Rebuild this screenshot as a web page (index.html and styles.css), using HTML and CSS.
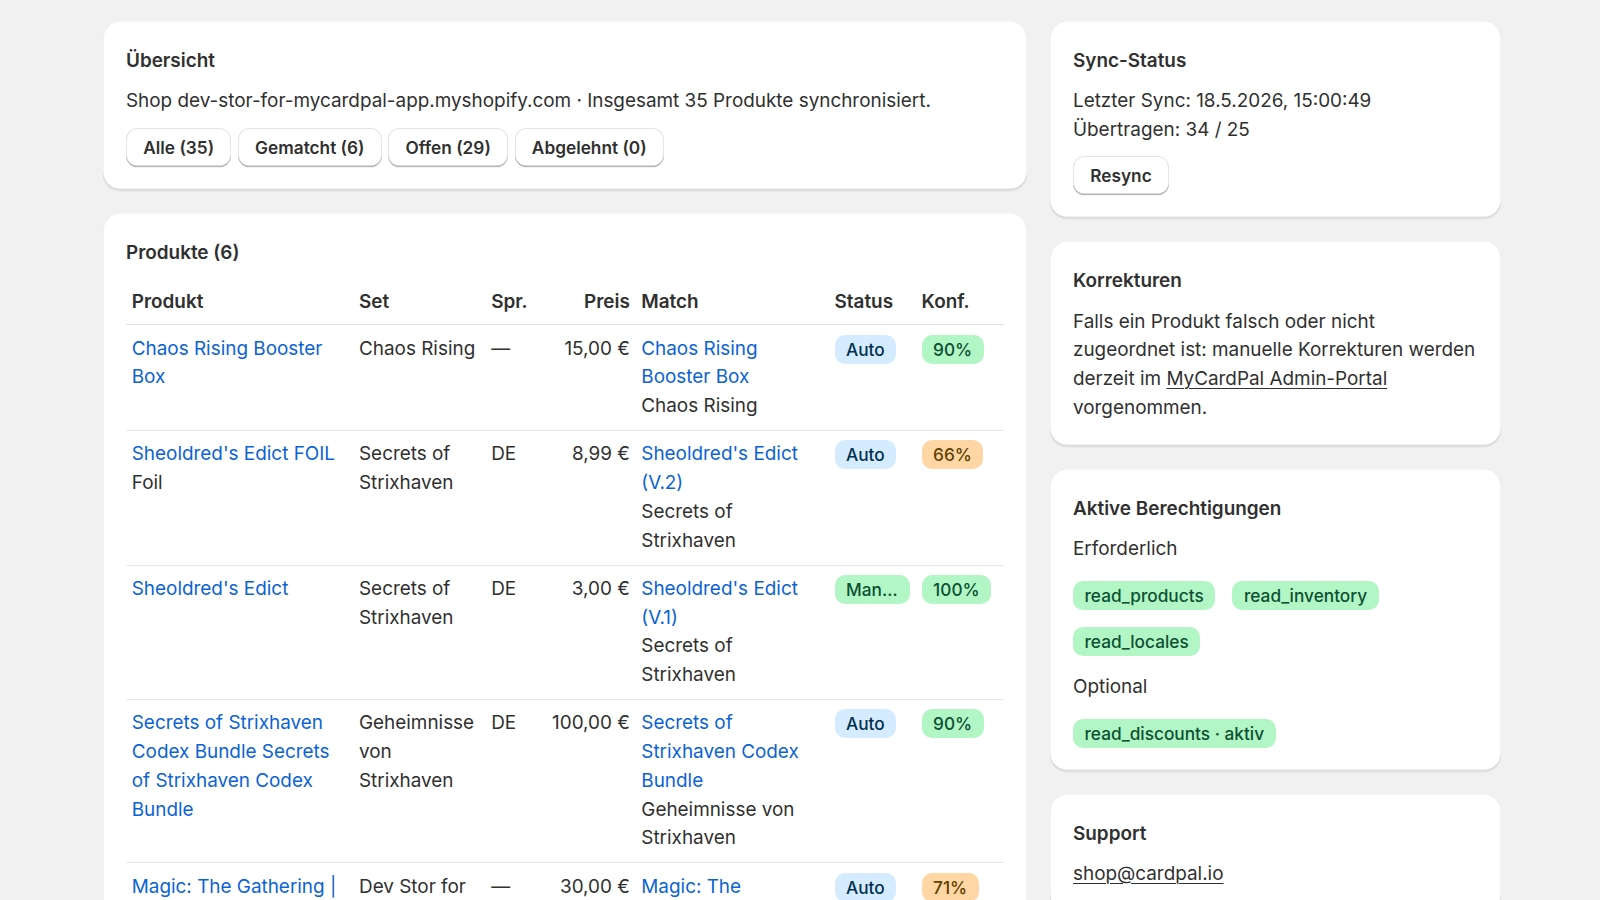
FILE: index.html
```html
<!DOCTYPE html>
<html lang="de">
<head>
<meta charset="utf-8">
<title>MyCardPal – Übersicht</title>
<link rel="stylesheet" href="styles.css">
</head>
<body>
<div class="page">
  <main class="col">
    <section class="card">
      <h2 class="card-title">Übersicht</h2>
      <p class="text">Shop dev-stor-for-mycardpal-app.myshopify.com · Insgesamt 35 Produkte synchronisiert.</p>
      <div class="btn-group">
        <button class="btn">Alle (35)</button>
        <button class="btn">Gematcht (6)</button>
        <button class="btn">Offen (29)</button>
        <button class="btn">Abgelehnt (0)</button>
      </div>
    </section>

    <section class="card">
      <h2 class="card-title">Produkte (6)</h2>
      <table class="products">
        <colgroup>
          <col class="c-prod"><col class="c-set"><col class="c-lang"><col class="c-price"><col class="c-match"><col class="c-status"><col class="c-conf">
        </colgroup>
        <thead>
          <tr>
            <th>Produkt</th><th>Set</th><th>Spr.</th><th class="num">Preis</th><th>Match</th><th>Status</th><th>Konf.</th>
          </tr>
        </thead>
        <tbody>
          <tr>
            <td><a class="link" href="#">Chaos Rising Booster Box</a></td>
            <td>Chaos Rising</td>
            <td>—</td>
            <td class="num">15,00 €</td>
            <td><a class="link" href="#">Chaos Rising Booster Box</a><div>Chaos Rising</div></td>
            <td><span class="badge info">Auto</span></td>
            <td><span class="badge success">90%</span></td>
          </tr>
          <tr>
            <td><a class="link" href="#">Sheoldred's Edict FOIL</a><div>Foil</div></td>
            <td>Secrets of Strixhaven</td>
            <td>DE</td>
            <td class="num">8,99 €</td>
            <td><a class="link" href="#">Sheoldred's Edict (V.2)</a><div>Secrets of Strixhaven</div></td>
            <td><span class="badge info">Auto</span></td>
            <td><span class="badge warning">66%</span></td>
          </tr>
          <tr>
            <td><a class="link" href="#">Sheoldred's Edict</a></td>
            <td>Secrets of Strixhaven</td>
            <td>DE</td>
            <td class="num">3,00 €</td>
            <td><a class="link" href="#">Sheoldred's Edict (V.1)</a><div>Secrets of Strixhaven</div></td>
            <td><span class="badge success">Manuell</span></td>
            <td><span class="badge success">100%</span></td>
          </tr>
          <tr>
            <td><a class="link" href="#">Secrets of Strixhaven Codex Bundle Secrets of Strixhaven Codex Bundle</a></td>
            <td>Geheimnisse von Strixhaven</td>
            <td>DE</td>
            <td class="num">100,00 €</td>
            <td><a class="link" href="#">Secrets of Strixhaven Codex Bundle</a><div>Geheimnisse von Strixhaven</div></td>
            <td><span class="badge info">Auto</span></td>
            <td><span class="badge success">90%</span></td>
          </tr>
          <tr>
            <td><a class="link" href="#">Magic: The Gathering | Foundations Bundle</a></td>
            <td>Dev Stor for MyCardPal</td>
            <td>—</td>
            <td class="num">30,00 €</td>
            <td><a class="link" href="#">Magic: The Gathering Foundations Bundle</a><div>Foundations</div></td>
            <td><span class="badge info">Auto</span></td>
            <td><span class="badge warning">71%</span></td>
          </tr>
          <tr>
            <td><a class="link" href="#">Duskmourn Play Booster</a></td>
            <td>Duskmourn</td>
            <td>EN</td>
            <td class="num">5,49 €</td>
            <td><a class="link" href="#">Duskmourn Play Booster</a><div>Duskmourn</div></td>
            <td><span class="badge info">Auto</span></td>
            <td><span class="badge success">95%</span></td>
          </tr>
        </tbody>
      </table>
    </section>
  </main>

  <aside class="col">
    <section class="card">
      <h2 class="card-title">Sync-Status</h2>
      <p class="text">Letzter Sync: 18.5.2026, 15:00:49<br>Übertragen: 34 / 25</p>
      <div class="btn-group">
        <button class="btn">Resync</button>
      </div>
    </section>

    <section class="card">
      <h2 class="card-title">Korrekturen</h2>
      <p class="text">Falls ein Produkt falsch oder nicht zugeordnet ist: manuelle Korrekturen werden derzeit im <a class="plain-link" href="#">MyCardPal Admin-Portal</a> vorgenommen.</p>
    </section>

    <section class="card">
      <h2 class="card-title">Aktive Berechtigungen</h2>
      <div class="stack">
        <p class="text">Erforderlich</p>
        <div class="badge-row">
          <span class="badge success">read_products</span>
          <span class="badge success">read_inventory</span>
          <span class="badge success">read_locales</span>
        </div>
        <p class="text">Optional</p>
        <div class="badge-row">
          <span class="badge success">read_discounts · aktiv</span>
        </div>
      </div>
    </section>

    <section class="card">
      <h2 class="card-title">Support</h2>
      <p class="text"><a class="plain-link" href="#">shop@cardpal.io</a></p>
    </section>
  </aside>
</div>
</body>
</html>
```

FILE: styles.css
```css
* { box-sizing: border-box; }

html, body {
  margin: 0;
  padding: 0;
  background: #f1f1f1;
}

body {
  font-family: Inter, "Noto Sans", "Liberation Sans", sans-serif;
  font-size: 18.9px;
  line-height: 28.75px;
  color: #303030;
}

.page {
  display: grid;
  grid-template-columns: 924px 451px;
  gap: 23px;
  padding: 21px 0 0 103px;
  align-items: start;
}

.col {
  display: flex;
  flex-direction: column;
  gap: 23px;
}

.card {
  background: #ffffff;
  border-radius: 17px;
  padding: 26px 23px 23px;
  display: flex;
  flex-direction: column;
  gap: 11.5px;
  box-shadow:
    0 1.4px 0 rgba(26, 26, 26, 0.07),
    inset 0 -1.4px 0 rgba(0, 0, 0, 0.13),
    inset 1px 0 0 rgba(0, 0, 0, 0.05),
    inset -1px 0 0 rgba(0, 0, 0, 0.05),
    inset 0 1px 0 rgba(0, 0, 0, 0.03);
}

.card-title {
  margin: 0;
  font-size: 18.9px;
  line-height: 28.75px;
  font-weight: 600;
  color: #303030;
}

.text {
  margin: 0;
}

.btn-group {
  display: flex;
  gap: 6.5px;
  flex-wrap: wrap;
}

.btn {
  font-family: inherit;
  font-size: 17.25px;
  font-weight: 600;
  color: #303030;
  background: #ffffff;
  border: 0;
  border-radius: 11.5px;
  height: 39px;
  padding: 0 17.25px;
  box-shadow:
    inset 0 -1.4px 0 #b5b5b5,
    inset 0 0 0 1px rgba(0, 0, 0, 0.1),
    0 1px 0 rgba(0, 0, 0, 0.05);
  cursor: pointer;
}

.products {
  width: 100%;
  table-layout: fixed;
  border-collapse: collapse;
}

.c-prod { width: 227px; }
.c-set { width: 132px; }
.c-lang { width: 60px; }
.c-price { width: 90px; }
.c-match { width: 193px; }
.c-status { width: 87px; }
.c-conf { width: 88px; }

.products th,
.products td {
  padding: 9.25px 5.75px;
  text-align: left;
  vertical-align: top;
}

.products th {
  font-weight: 600;
  padding-bottom: 7.5px;
  border-bottom: 1px solid #e1e1e1;
}

.products td {
  font-weight: 400;
  border-bottom: 1px solid #e8e8e8;
}

.products .num {
  text-align: right;
  white-space: nowrap;
}

.link {
  color: #0b63d6;
  text-decoration: none;
}

.plain-link {
  color: #303030;
  text-decoration: underline;
  text-underline-offset: 3px;
  text-decoration-thickness: 1.4px;
}

.badge {
  display: inline-block;
  max-width: 100%;
  overflow: hidden;
  white-space: nowrap;
  text-overflow: ellipsis;
  vertical-align: top;
  font-size: 17.25px;
  line-height: 23px;
  font-weight: 550;
  padding: 3px 11.5px;
  border-radius: 10px;
}

.badge.info {
  background: #d5ebff;
  color: #00304f;
}

.badge.success {
  background: #b2f6c6;
  color: #0c5132;
}

.badge.warning {
  background: #ffd6a4;
  color: #5e4200;
}

.stack {
  display: flex;
  flex-direction: column;
  gap: 17px;
}

.badge-row {
  display: flex;
  flex-wrap: wrap;
  gap: 17.25px;
}
```
